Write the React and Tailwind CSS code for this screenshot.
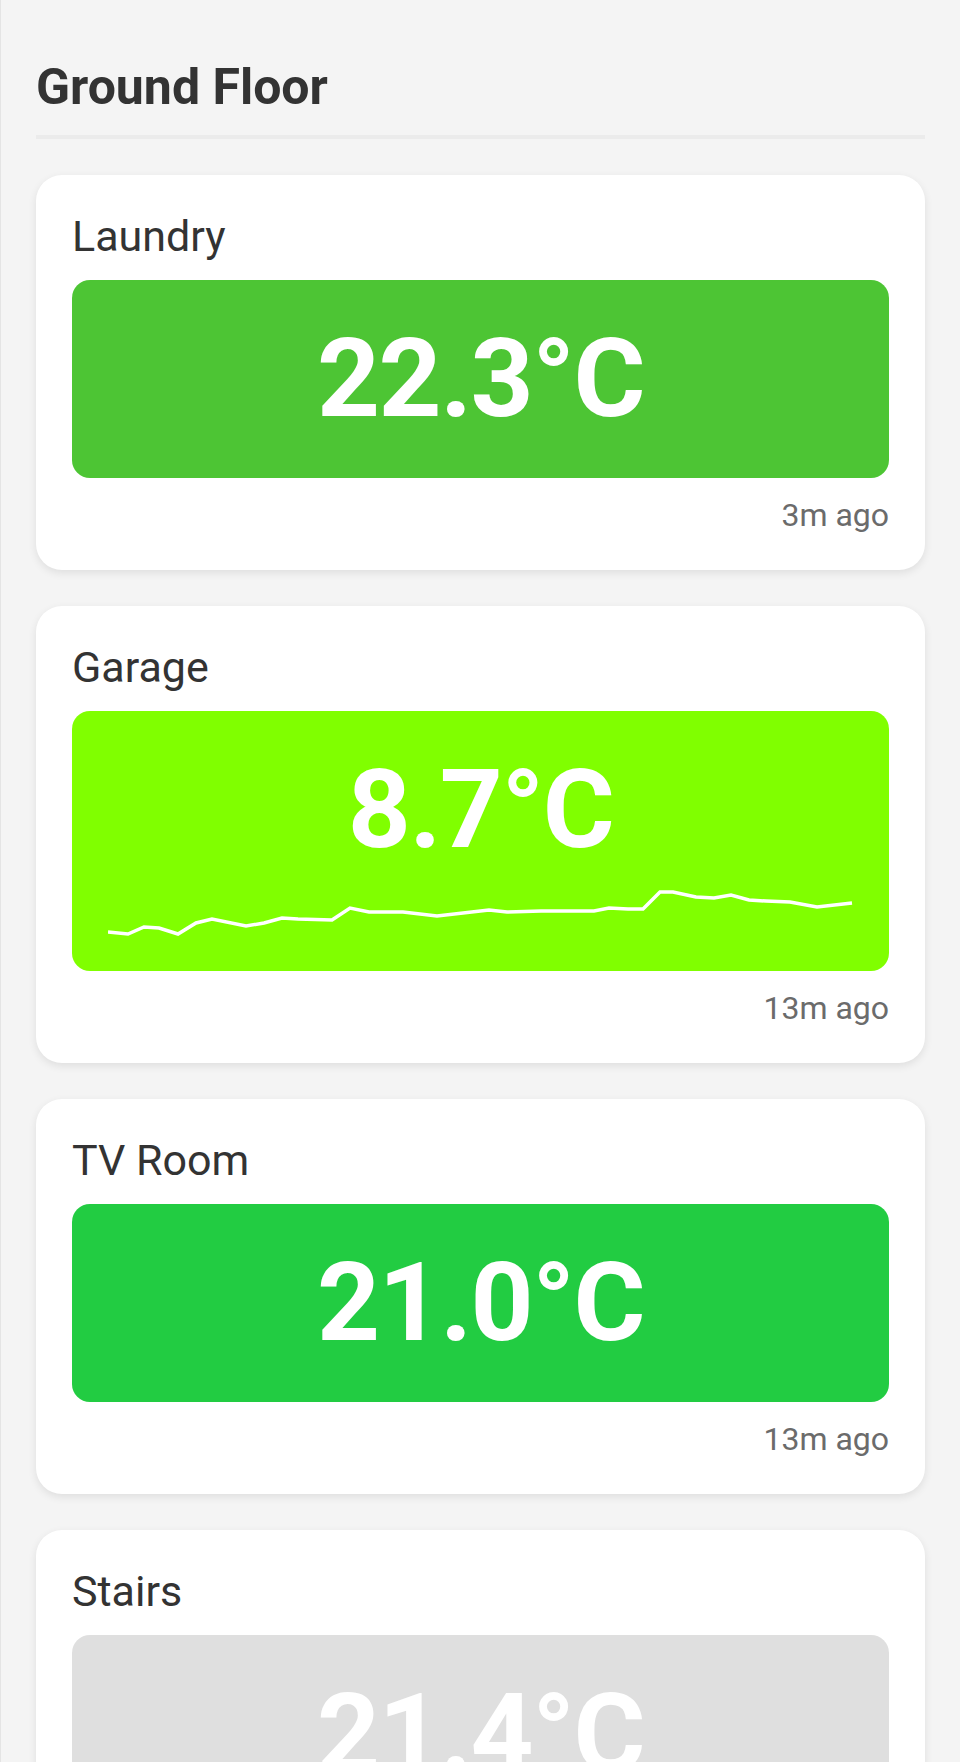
const rooms = [
    { name: "Laundry", temp: "22.3°C", color: "bg-[#4dc534]", ago: "3m ago" },
    {
        name: "Garage",
        temp: "8.7°C",
        color: "bg-[#80ff00]",
        ago: "13m ago",
        history: [
            [0, 57], [20, 59], [36, 52], [51, 53], [70, 59], [88, 48], [104, 44], [138, 51],
            [156, 48], [174, 43], [190, 44], [224, 45], [242, 33], [261, 37], [295, 37],
            [329, 41], [381, 35], [399, 37], [433, 36], [486, 36], [501, 33], [520, 34],
            [535, 34], [552, 17], [565, 17], [588, 22], [606, 23], [623, 20], [641, 25],
            [658, 26], [682, 27], [709, 32], [744, 28],
        ],
    },
    { name: "TV Room", temp: "21.0°C", color: "bg-[#22cc42]", ago: "13m ago" },
    { name: "Stairs", temp: "21.4°C", color: "bg-[#dfdfdf]", ago: "14m ago" },
];

function Sparkline({ points }) {
    return (
        <svg viewBox="0 0 745 62" className="block w-full h-[62px]" preserveAspectRatio="none">
            <polyline
                points={points.map(p => p.join(",")).join(" ")}
                fill="none"
                stroke="#ffffff"
                strokeWidth="3.5"
                strokeLinejoin="miter"
            />
        </svg>
    )
}

function RoomCard({ room }) {
    return (
        <div className="bg-white rounded-[26px] shadow-[0_3px_8px_rgba(0,0,0,0.09)] px-[36px] pt-[37px] pb-[36px]">
            <h2 className="text-[43px] leading-[49px] text-[#333333]">{room.name}</h2>
            <div className={`${room.color} rounded-[18px] mt-[19px] px-[36px] py-[34px]`}>
                <div className="text-center text-white font-bold text-[110px] leading-[130px] tracking-[-1.5px]">
                    {room.temp}
                </div>
                {room.history && <Sparkline points={room.history} />}
            </div>
            <p className="mt-[19px] text-right text-[32px] leading-[37px] text-[#6b6b6b]">{room.ago}</p>
        </div>
    )
}

export default function App() {
    return (
        <div className="min-h-screen bg-[#f4f4f4] border-l border-[#e4e4e4] pl-[35px] pr-[35px] pt-[58px] pb-[40px] [font-family:Roboto,'Liberation_Sans',sans-serif]">
            <h1 className="text-[50px] leading-[59px] font-bold text-[#333333]">Ground Floor</h1>
            <div className="h-[4px] bg-[#ebebeb] mt-[18px]" />
            <div className="flex flex-col gap-[36px] mt-[36px]">
                {rooms.map(room => (
                    <RoomCard key={room.name} room={room} />
                ))}
            </div>
        </div>
    )
}
